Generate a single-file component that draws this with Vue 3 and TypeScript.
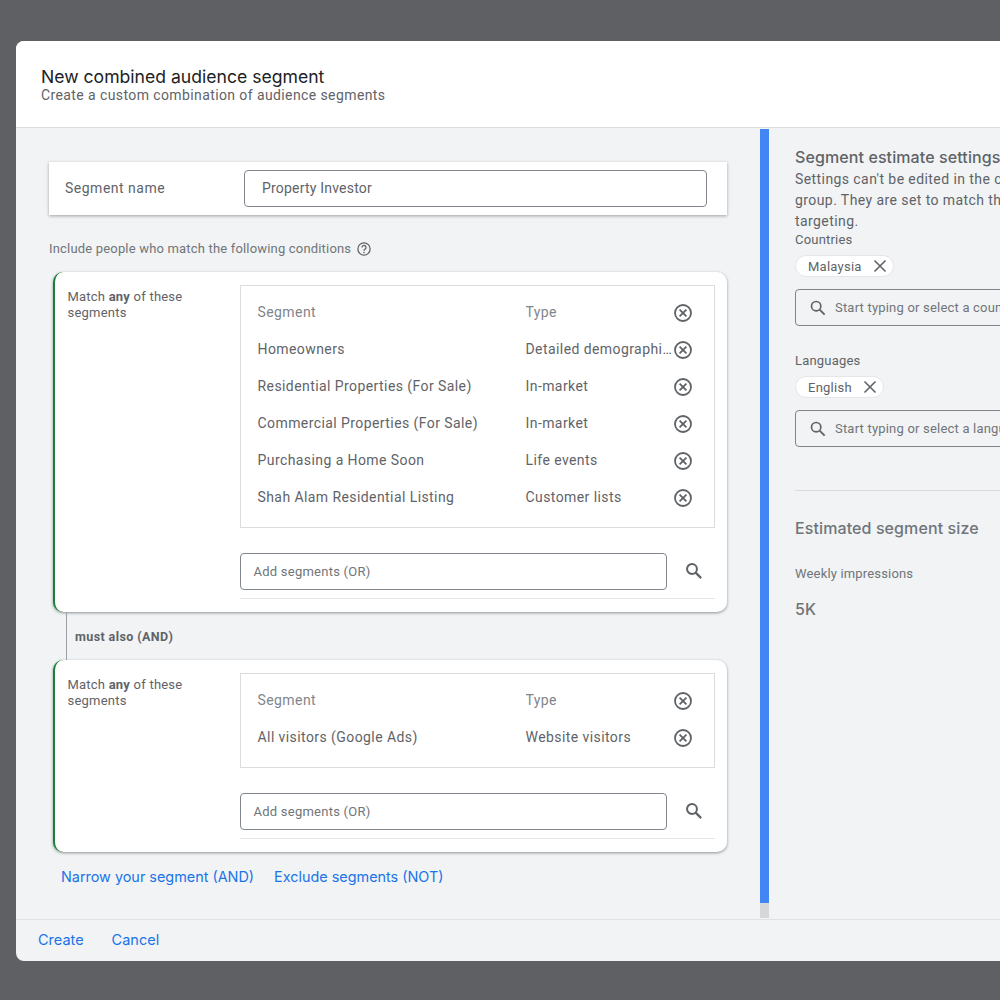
<script setup lang="ts">
interface Row { name: string; type: string }
interface Group { rows: Row[] }
const groups: Group[] = [
  { rows: [
    { name: 'Homeowners', type: 'Detailed demographics' },
    { name: 'Residential Properties (For Sale)', type: 'In-market' },
    { name: 'Commercial Properties (For Sale)', type: 'In-market' },
    { name: 'Purchasing a Home Soon', type: 'Life events' },
    { name: 'Shah Alam Residential Listing', type: 'Customer lists' },
  ] },
  { rows: [{ name: 'All visitors (Google Ads)', type: 'Website visitors' }] },
]
const targets = [
  { label: 'Countries', chip: 'Malaysia', placeholder: 'Start typing or select a country' },
  { label: 'Languages', chip: 'English', placeholder: 'Start typing or select a language' },
]
</script>

<template>
  <div class="page">
    <div class="dialog">
      <header class="head">
        <h1>New combined audience segment</h1>
        <p>Create a custom combination of audience segments</p>
      </header>
      <div class="body">
        <main class="left">
          <section class="name-card">
            <span class="name-label">Segment name</span>
            <div class="name-input">Property Investor</div>
          </section>
          <div class="include">
            <span>Include people who match the following conditions</span>
            <svg class="help" viewBox="0 0 24 24" width="16" height="16">
              <circle cx="12" cy="12" r="9.2" fill="none" stroke="#5f6368" stroke-width="1.9" />
              <path d="M9 9.6a3 3 0 1 1 4.8 2.4c-1.1.8-1.8 1.3-1.8 2.6" fill="none" stroke="#5f6368" stroke-width="1.9" />
              <circle cx="12" cy="17.2" r="1.2" fill="#5f6368" />
            </svg>
          </div>
          <template v-for="(g, gi) in groups" :key="gi">
            <div v-if="gi > 0" class="connector"><span>must also (AND)</span></div>
            <section class="group" :class="{ short: g.rows.length === 1 }">
              <div class="match">Match <b>any</b> of these segments</div>
              <div class="group-main">
                <div class="table">
                  <div class="row th">
                    <span class="c1">Segment</span><span class="c2">Type</span>
                    <svg class="x" viewBox="0 0 20 20" width="20" height="20"><circle cx="10" cy="10" r="8" fill="none" stroke="#5f6368" stroke-width="1.8" /><path d="M6.6 6.6l6.8 6.8M13.4 6.6l-6.8 6.8" stroke="#5f6368" stroke-width="1.8" /></svg>
                  </div>
                  <div v-for="r in g.rows" :key="r.name" class="row">
                    <span class="c1">{{ r.name }}</span><span class="c2">{{ r.type }}</span>
                    <svg class="x" viewBox="0 0 20 20" width="20" height="20"><circle cx="10" cy="10" r="8" fill="none" stroke="#5f6368" stroke-width="1.8" /><path d="M6.6 6.6l6.8 6.8M13.4 6.6l-6.8 6.8" stroke="#5f6368" stroke-width="1.8" /></svg>
                  </div>
                </div>
                <div class="add">
                  <div class="add-input">Add segments (OR)</div>
                  <svg class="add-search" viewBox="0 0 24 24" width="22" height="22"><circle cx="9.8" cy="9.8" r="5.4" fill="none" stroke="#5f6368" stroke-width="2.2" /><path d="M13.8 13.8l6 6" stroke="#5f6368" stroke-width="2.4" /></svg>
                </div>
              </div>
            </section>
          </template>
          <div class="links">
            <a>Narrow your segment (AND)</a>
            <a>Exclude segments (NOT)</a>
          </div>
        </main>
        <div class="scroll"><div class="thumb"></div></div>
        <aside class="right">
          <h2>Segment estimate settings</h2>
          <p class="note">Settings can't be edited in the campaign or ad<br />group. They are set to match the campaign's<br />targeting.</p>
          <div v-for="t in targets" :key="t.label" class="target">
            <div class="t-label">{{ t.label }}</div>
            <div class="chip">
              <span>{{ t.chip }}</span>
              <svg viewBox="0 0 14 14" width="14" height="14"><path d="M1.5 1.5l11 11M12.5 1.5l-11 11" stroke="#5f6368" stroke-width="1.6" /></svg>
            </div>
            <div class="t-input">
              <svg viewBox="0 0 24 24" width="20" height="20"><circle cx="9.8" cy="9.8" r="5.6" fill="none" stroke="#5f6368" stroke-width="2" /><path d="M14 14l6 6" stroke="#5f6368" stroke-width="2.2" /></svg>
              <span>{{ t.placeholder }}</span>
            </div>
          </div>
          <hr />
          <h3>Estimated segment size</h3>
          <div class="weekly">Weekly impressions</div>
          <div class="value">5K</div>
        </aside>
      </div>
      <footer class="foot">
        <a>Create</a>
        <a>Cancel</a>
      </footer>
    </div>
  </div>
</template>

<style>
html, body { margin: 0; overflow: hidden; background: #5f6063; }
</style>

<style scoped>
.page {
  width: 1000px;
  height: 1000px;
  box-sizing: border-box;
  padding: 41px 0 0 16px;
  overflow: hidden;
  background: #5f6063;
  font-family: Roboto, "Liberation Sans", sans-serif;
  color: #5f6368;
}
.dialog {
  width: 1200px;
  height: 920px;
  background: #f1f3f4;
  border-radius: 8px 0 0 8px;
  display: flex;
  flex-direction: column;
  overflow: hidden;
}
.head {
  height: 87px;
  box-sizing: border-box;
  background: #fff;
  border-bottom: 1px solid #dadce0;
  padding: 26px 25px 0;
}
.head h1 {
  margin: 0;
  font: 400 17.6px/20px Inter, Roboto, sans-serif;
  color: #202124;
}
.head p { margin: 0; font: 400 14px/16px Roboto, sans-serif; letter-spacing: .4px; color: #5f6368; }
.body { height: 791px; display: flex; }
.left { width: 744px; box-sizing: border-box; padding: 34px 33px 0; flex: none; }
.name-card {
  height: 53px;
  width: 678px;
  background: #fff;
  display: flex;
  align-items: center;
  box-shadow: 0 1px 3px rgba(60, 64, 67, .45);
}
.name-label { width: 195px; padding: 0 0 1px 16px; box-sizing: border-box; font-size: 14px; letter-spacing: .5px; }
.name-input {
  width: 463px;
  height: 37px;
  box-sizing: border-box;
  border: 1px solid #80868b;
  border-radius: 4px;
  padding-left: 17px;
  font-size: 14px;
  letter-spacing: .2px;
  line-height: 35px;
  background: #fff;
}
.include {
  height: 57px;
  box-sizing: border-box;
  padding-top: 10px;
  display: flex;
  align-items: center;
  gap: 5px;
  font-size: 13px;
  letter-spacing: .18px;
  color: #70757a;
}
.group {
  height: 340px;
  width: 674px;
  margin-left: 4px;
  box-sizing: border-box;
  background: #fff;
  border-left: 2px solid #188038;
  border-radius: 10px;
  box-shadow: 0 1px 3px rgba(60, 64, 67, .55);
  display: flex;
  padding: 13px 12px 0 12.5px;
}
.group.short { height: 192px; }
.match { width: 172.5px; padding-top: 4px; box-sizing: border-box; padding-right: 40px; font-size: 13px; letter-spacing: .22px; line-height: 16px; flex: none; }
.match b { font-weight: 700; }
.group-main { width: 475px; }
.table { border: 1px solid #dadce0; padding: 7px 16px 12px 16.5px; }
.row { height: 37px; display: flex; align-items: center; font-size: 14px; color: #5f6368; }
.row.th { color: #80868b; }
.c1 { width: 268px; flex: none; letter-spacing: .42px; }
.c2 { width: 147px; flex: none; overflow: hidden; white-space: nowrap; text-overflow: ellipsis; letter-spacing: .42px; }
.x { flex: none; margin-top: 2px; }
.add {
  margin-top: 25px;
  height: 46px;
  box-sizing: border-box;
  border-bottom: 1px solid #e3e5e8;
  display: flex;
  align-items: flex-start;
}
.add-input {
  width: 427px;
  height: 37px;
  box-sizing: border-box;
  border: 1px solid #80868b;
  border-radius: 4px;
  padding-left: 12.5px;
  font-size: 13px;
  letter-spacing: .24px;
  line-height: 35px;
  color: #70757a;
}
.add-search { margin: 7px 0 0 16px; }
.connector {
  height: 48px;
  margin-left: 17px;
  border-left: 1px solid #9aa0a6;
  display: flex;
  align-items: center;
  padding-left: 8px;
  font-size: 12.5px;
  letter-spacing: .4px;
  font-weight: 700;
  color: #5f6368;
}
.links { margin: 15px 0 0 12px; display: flex; gap: 20px; font: 400 14.4px/20px Inter, Roboto, sans-serif; color: #1a73e8; }
.scroll { width: 9px; flex: none; margin-top: 1px; height: 789px; background: #d6d7d9; }
.thumb { height: 774px; background: #4285f4; }
.right { flex: none; width: 360px; padding: 20px 0 0 26px; }
.right h2 { margin: 0; font: 500 16px/18px Inter, Roboto, sans-serif; letter-spacing: .1px; color: #5f6368; }
.note { margin: 3px 0 0; font-size: 14px; letter-spacing: .42px; line-height: 21px; white-space: nowrap; color: #5f6368; }
.target { height: 121px; }
.t-label { font-size: 13px; letter-spacing: .2px; line-height: 16px; }
.chip {
  margin-top: 7px;
  display: inline-flex;
  align-items: center;
  height: 20px;
  padding: 0 6px 0 12px;
  gap: 11px;
  background: #fff;
  border: 1px solid #e4e6e9;
  border-radius: 11px;
  font-size: 13px;
  letter-spacing: .25px;
  vertical-align: top;
}
.t-input {
  margin-top: 12px;
  height: 37px;
  width: 300px;
  box-sizing: border-box;
  border: 1px solid #80868b;
  border-radius: 4px;
  display: flex;
  align-items: center;
  gap: 7px;
  padding-left: 12px;
  font-size: 13px;
  letter-spacing: .2px;
  color: #70757a;
  white-space: nowrap;
}
.right hr { margin: 16px 0 0; border: 0; border-top: 1px solid #dadce0; width: 300px; }
.right h3 { margin: 27px 0 0; font: 500 16px/20px Inter, Roboto, sans-serif; letter-spacing: .1px; color: #70757a; }
.weekly { margin-top: 28px; font-size: 13px; letter-spacing: .17px; line-height: 16px; color: #70757a; }
.value { margin-top: 17px; font: 500 16px/20px Inter, Roboto, sans-serif; color: #70757a; }
.foot {
  height: 42px;
  box-sizing: border-box;
  border-top: 1px solid #dfe1e5;
  display: flex;
  align-items: center;
  gap: 28px;
  padding: 0 0 2px 22px;
  font: 400 14.5px Inter, Roboto, sans-serif;
  color: #1a73e8;
}
</style>
